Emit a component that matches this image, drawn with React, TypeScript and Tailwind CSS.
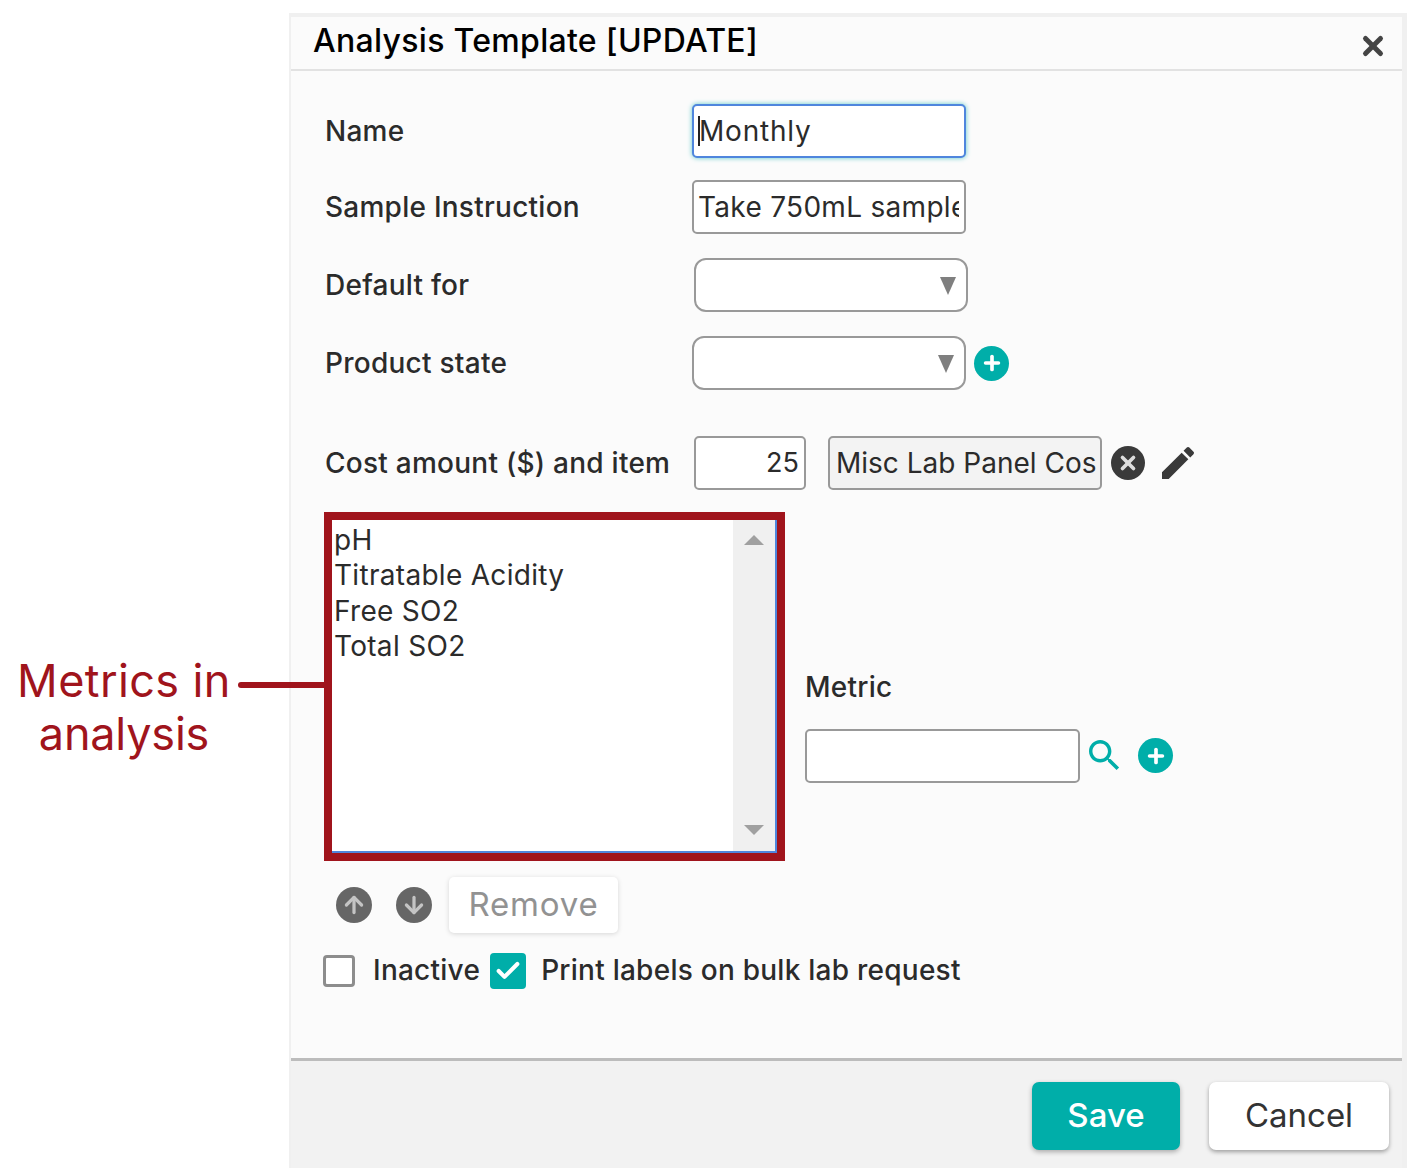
import { Plus, X, ArrowUp, ArrowDown, Check } from "lucide-react";

const font = "font-['Inter','Liberation_Sans',sans-serif]";

function Label({ text }: { text: string }) {
  return <div className="w-[401px] shrink-0 pb-[1px] pl-[34px] text-[28px] font-medium tracking-[0.25px] text-[#2b2b2b]">{text}</div>;
}

function Select({ className = "" }: { className?: string }) {
  return (
    <div className={`relative h-[54px] w-[274px] rounded-[12px] border-2 border-[#999] bg-white ${className}`}>
      <span className="absolute right-[10px] top-[17px] h-0 w-0 border-x-[8px] border-t-[18px] border-x-transparent border-t-[#7f7f7f]" />
    </div>
  );
}

function RoundIcon({ className = "", children }: { className?: string; children: React.ReactNode }) {
  return <span className={`flex items-center justify-center rounded-full ${className}`}>{children}</span>;
}

export default function App() {
  return (
    <div className={`flex h-[1176px] w-[1420px] items-start bg-white ${font}`}>
      {/* Annotation */}
      <div className="w-[289px] pr-[41px] pt-[654px] text-center text-[45px] leading-[53px] text-[#a0141c]">
        <span className="tracking-[0.4px]">Metrics in</span>
        <br />
        <span className="tracking-[-0.2px]">analysis</span>
      </div>

      <div className="mt-[13px] flex h-[1155px] w-[1118px] flex-col border-l-2 border-r-[5px] border-t-[4px] border-[#f0f0f0] bg-[#fbfbfb]">
        {/* Header */}
        <div className="flex h-[54px] shrink-0 items-start justify-between border-b-2 border-[#e2e2e2] pl-[22px] pr-[14px]">
          <span className="pt-[3px] text-[32px] font-medium leading-[42px] tracking-[0.3px] text-black">Analysis Template [UPDATE]</span>
          <X size={30} strokeWidth={4} className="mt-[14px] text-[#444]" />
        </div>

        {/* Form */}
        <div className="flex-1 pt-[33px]">
          <div className="flex items-center">
            <Label text="Name" />
            <div className="flex h-[54px] w-[274px] items-center rounded-[5px] border-2 border-[#4f86dd] bg-white pl-[4px] text-[28px] tracking-[0.8px] text-[#2b2b2b] shadow-[0_0_5px_#5cc8c8]">
              <span className="mr-[-1px] h-[30px] w-[2px] bg-[#222]" />
              Monthly
            </div>
          </div>

          <div className="mt-[22px] flex items-center">
            <Label text="Sample Instruction" />
            <div className="flex h-[54px] w-[274px] items-center rounded-[5px] border-2 border-[#999] bg-white pl-[4px] pr-[5px] text-[28px] tracking-[0.3px] text-[#2b2b2b]">
              <span className="block overflow-hidden whitespace-nowrap">Take 750mL sample size</span>
            </div>
          </div>

          <div className="mt-[24px] flex items-center">
            <Label text="Default for" />
            <Select className="ml-[2px]" />
          </div>

          <div className="mt-[24px] flex items-center">
            <Label text="Product state" />
            <Select />
            <RoundIcon className="ml-[8px] h-[35px] w-[35px] bg-[#00aea9]">
              <Plus size={22} strokeWidth={4} className="text-white" />
            </RoundIcon>
          </div>

          <div className="mt-[46px] flex items-center">
            <Label text="Cost amount ($) and item" />
            <div className="ml-[2px] flex h-[54px] w-[112px] items-center justify-end rounded-[5px] border-2 border-[#999] bg-white pr-[5px] text-[27px] text-[#2b2b2b]">
              25
            </div>
            <div className="ml-[22px] flex h-[54px] w-[274px] items-center whitespace-nowrap rounded-[5px] border-2 border-[#999] bg-[#f3f3f3] pl-[6px] text-[28px] text-[#2b2b2b]">
              Misc Lab Panel Cos
            </div>
            <RoundIcon className="ml-[9px] h-[34px] w-[34px] bg-[#3a3a3a]">
              <X size={22} strokeWidth={4} className="text-[#ddd]" />
            </RoundIcon>
            <svg width="32" height="32" viewBox="3 3 18 18" className="ml-[17px] fill-[#3a3a3a]">
              <path d="M3 17.25V21h3.75L17.81 9.94l-3.75-3.75L3 17.25zM20.71 7.04c.39-.39.39-1.02 0-1.41l-2.34-2.34c-.39-.39-1.02-.39-1.41 0l-1.83 1.83 3.75 3.75 1.83-1.83z" />
            </svg>
          </div>

          {/* Metrics list */}
          <div className="mt-[22px] flex items-center pl-[33px]">
            <div className="relative h-[349px] w-[461px] shrink-0 border-[8px] border-[#a0141c]">
              <span className="absolute left-[-94px] top-[162px] h-[6px] w-[90px] rounded-full bg-[#a0141c]" />
              <div className="flex h-full border-b-2 border-r-2 border-[#4f86dd] bg-white">
                <div className="flex-1 pl-[2px] pt-[3px] text-[28px] leading-[35.3px] tracking-[0.3px] text-[#2b2b2b]">
                  <div>pH</div>
                  <div>Titratable Acidity</div>
                  <div>Free SO2</div>
                  <div>Total SO2</div>
                </div>
                <div className="flex w-[42px] flex-col items-center justify-between bg-[#f0f0f0] pb-[16px] pt-[15px]">
                  <span className="h-0 w-0 border-x-[10px] border-b-[10px] border-x-transparent border-b-[#a0a0a0]" />
                  <span className="h-0 w-0 border-x-[10px] border-t-[10px] border-x-transparent border-t-[#a0a0a0]" />
                </div>
              </div>
            </div>
            <div className="ml-[20px] pt-[75px]">
              <div className="text-[28px] font-medium tracking-[0.25px] text-[#2b2b2b]">Metric</div>
              <div className="mt-[21px] flex items-center">
                <div className="h-[54px] w-[275px] rounded-[5px] border-2 border-[#999] bg-white" />
                <svg width="31" height="31" viewBox="3 3 18 18" className="ml-[9px] fill-[#00aea9]">
                  <path d="M15.5 14h-.79l-.28-.27C15.41 12.59 16 11.11 16 9.5 16 5.91 13.09 3 9.5 3S3 5.91 3 9.5 5.91 16 9.5 16c1.61 0 3.09-.59 4.23-1.57l.27.28v.79l5 4.99L20.49 19l-4.99-5zm-6 0C7.01 14 5 11.99 5 9.5S7.01 5 9.5 5 14 7.01 14 9.5 11.99 14 9.5 14z" />
                </svg>
                <RoundIcon className="ml-[18px] h-[35px] w-[35px] bg-[#00aea9]">
                  <Plus size={22} strokeWidth={4} className="text-white" />
                </RoundIcon>
              </div>
            </div>
          </div>

          <div className="mt-[16px] flex items-center pl-[45px]">
            <RoundIcon className="h-[36px] w-[36px] bg-[#666]">
              <ArrowUp size={26} strokeWidth={3} className="text-[#c4c4c4]" />
            </RoundIcon>
            <RoundIcon className="ml-[24px] h-[36px] w-[36px] bg-[#666]">
              <ArrowDown size={26} strokeWidth={3} className="text-[#c4c4c4]" />
            </RoundIcon>
            <button className="ml-[17px] h-[56px] w-[169px] rounded-[5px] bg-white text-[33px] tracking-[0.8px] text-[#929292] shadow-[0_1px_5px_rgba(0,0,0,0.15)]">
              Remove
            </button>
          </div>

          <div className="mt-[16px] flex items-center pl-[32px] text-[28px] font-medium tracking-[0.25px] text-[#2b2b2b]">
            <span className="h-[32px] w-[32px] rounded-[4px] border-[3px] border-[#8d8d8d] bg-white" />
            <span className="ml-[18px] pb-[2px]">Inactive</span>
            <span className="ml-[10px] flex h-[36px] w-[36px] items-center justify-center rounded-[4px] bg-[#00aea9]">
              <Check size={28} strokeWidth={3.5} className="text-white" />
            </span>
            <span className="ml-[15px] pb-[2px]">Print labels on bulk lab request</span>
          </div>
        </div>

        {/* Footer */}
        <div className="flex h-[110px] shrink-0 items-start justify-end gap-[29px] border-t-[3px] border-[#bcbcbc] bg-[#f2f2f2] pr-[13px] pt-[21px]">
          <button className="h-[68px] w-[148px] rounded-[7px] bg-[#00aea9] text-[33px] font-medium text-white shadow-[0_2px_5px_rgba(0,0,0,0.3)]">
            Save
          </button>
          <button className="h-[68px] w-[180px] rounded-[7px] bg-white text-[33px] text-[#333] shadow-[0_2px_4px_rgba(0,0,0,0.35)]">
            Cancel
          </button>
        </div>
      </div>
    </div>
  );
}
